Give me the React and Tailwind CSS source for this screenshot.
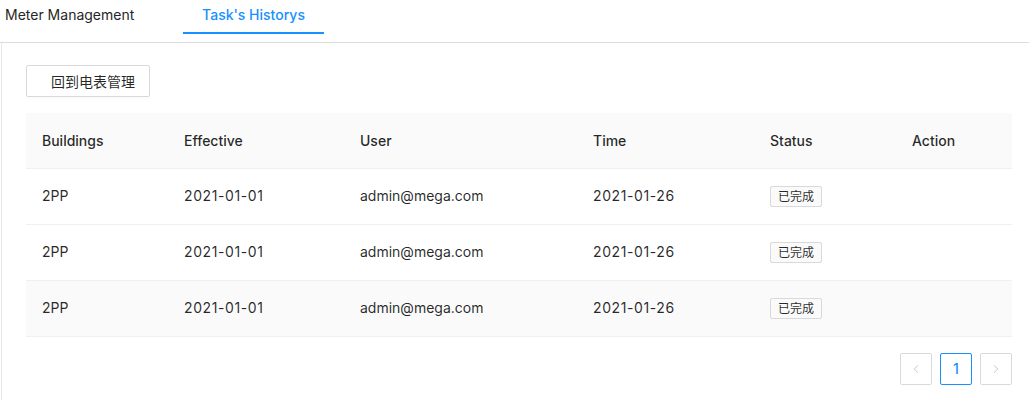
import { ChevronLeft, ChevronRight } from 'lucide-react';

const rows = [
  { building: '2PP', effective: '2021-01-01', user: 'admin@mega.com', time: '2021-01-26', status: '已完成' },
  { building: '2PP', effective: '2021-01-01', user: 'admin@mega.com', time: '2021-01-26', status: '已完成' },
  { building: '2PP', effective: '2021-01-01', user: 'admin@mega.com', time: '2021-01-26', status: '已完成' },
];

const cols = ['Buildings', 'Effective', 'User', 'Time', 'Status', 'Action'];
const widths = ['w-[142px]', 'w-[176px]', 'w-[233px]', 'w-[177px]', 'w-[142px]', 'w-[116px]'];

export default function App() {
  return (
    <div
      className="w-[1029px] h-[400px] bg-white text-[14px] text-black/85 overflow-hidden"
      style={{ fontFamily: 'Inter, "Noto Sans CJK SC", sans-serif' }}
    >
      {/* tabs */}
      <div className="flex items-start h-[43px] border-b border-[#dcdcdc]">
        <div className="pl-[5px] w-[183px] h-[34px] leading-[30px] text-[#262626]">Meter Management</div>
        <div className="w-[141px] text-center h-[34px] leading-[30px] text-[#1890ff] font-medium border-b-2 border-[#1890ff]">
          Task's Historys
        </div>
      </div>

      <div className="ml-[1px] border-l border-[#e8e8e8] h-full pl-[24px] pr-[17px] pt-[22px]">
        <button className="h-[32px] w-[124px] border border-[#d9d9d9] rounded-[2px] pl-[24px] text-left text-[14px] text-black/85 shadow-[0_2px_0_rgba(0,0,0,0.015)]">
          回到电表管理
        </button>

        <table className="mt-[16px] w-[986px] border-collapse table-fixed">
          <thead>
            <tr className="bg-[#fafafa]">
              {cols.map((c, i) => (
                <th
                  key={c}
                  className={`${widths[i]} h-[55px] px-[16px] text-left font-medium text-black/85 border-b border-[#f0f0f0]`}
                >
                  {c}
                </th>
              ))}
            </tr>
          </thead>
          <tbody>
            {rows.map((r, i) => (
              <tr key={i} className={i === 2 ? 'bg-[#fafafa]' : 'bg-white'}>
                <td className="h-[56px] px-[16px] pb-[1px] border-b border-[#f0f0f0]">{r.building}</td>
                <td className="px-[16px] pb-[1px] border-b border-[#f0f0f0] tracking-[0.6px]">{r.effective}</td>
                <td className="px-[16px] pb-[1px] border-b border-[#f0f0f0]">{r.user}</td>
                <td className="px-[16px] pb-[1px] border-b border-[#f0f0f0] tracking-[0.6px]">{r.time}</td>
                <td className="px-[16px] pb-[1px] border-b border-[#f0f0f0]">
                  <span className="inline-block h-[21px] leading-[19px] px-[7px] text-[12px] border border-[#d9d9d9] bg-[#fafafa] rounded-[2px]">
                    {r.status}
                  </span>
                </td>
                <td className="px-[16px] pb-[1px] border-b border-[#f0f0f0]"></td>
              </tr>
            ))}
          </tbody>
        </table>

        <div className="flex justify-end gap-[8px] mt-[16px] w-[986px]">
          <div className="w-[32px] h-[32px] border border-[#d9d9d9] rounded-[2px] flex items-center justify-center text-black/25">
            <ChevronLeft size={14} strokeWidth={1.5} />
          </div>
          <div className="w-[32px] h-[32px] border border-[#1890ff] rounded-[2px] flex items-center justify-center text-[#1890ff] font-medium">
            1
          </div>
          <div className="w-[32px] h-[32px] border border-[#d9d9d9] rounded-[2px] flex items-center justify-center text-black/25">
            <ChevronRight size={14} strokeWidth={1.5} />
          </div>
        </div>
      </div>
    </div>
  );
}
